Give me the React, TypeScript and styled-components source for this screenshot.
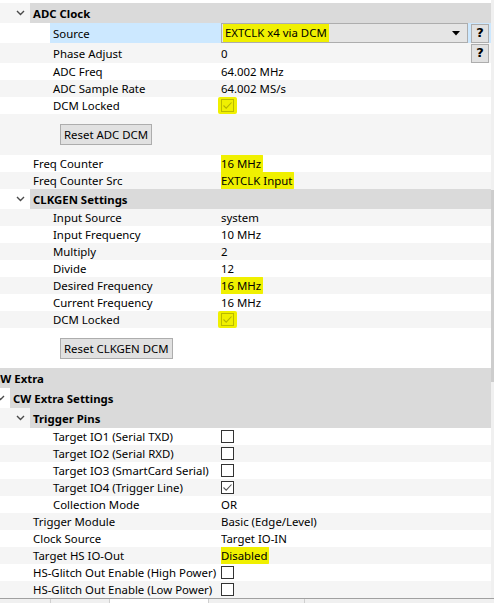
import React from 'react';
import styled, { createGlobalStyle } from 'styled-components';

const Global = createGlobalStyle`
  html, body { margin: 0; padding: 0; background: #fff; overflow: hidden; }
  body { font-family: "Noto Sans", "Segoe UI", sans-serif; font-size: 11.4px; color: #000; }
`;

const SCROLL_X = 30;
const INDENT = 20;
const NAME_W = 250;
const MARK = '#f0f000';

type Value =
  | { kind: 'text'; text: string; mark?: boolean; help?: boolean }
  | { kind: 'check'; checked: boolean; disabled?: boolean; mark?: boolean }
  | { kind: 'combo'; text: string; mark?: boolean; help?: boolean };

type Item =
  | { type: 'group'; level: number; label: string }
  | { type: 'prop'; level: number; label: string; value: Value; tall?: boolean; selected?: boolean }
  | { type: 'action'; level: number; label: string; height: number };

const items: Item[] = [
  { type: 'group', level: 2, label: 'ADC Clock' },
  { type: 'prop', level: 3, label: 'Source', tall: true, selected: true, value: { kind: 'combo', text: 'EXTCLK x4 via DCM', mark: true, help: true } },
  { type: 'prop', level: 3, label: 'Phase Adjust', tall: true, value: { kind: 'text', text: '0', help: true } },
  { type: 'prop', level: 3, label: 'ADC Freq', value: { kind: 'text', text: '64.002 MHz' } },
  { type: 'prop', level: 3, label: 'ADC Sample Rate', value: { kind: 'text', text: '64.002 MS/s' } },
  { type: 'prop', level: 3, label: 'DCM Locked', value: { kind: 'check', checked: true, disabled: true, mark: true } },
  { type: 'action', level: 3, label: 'Reset ADC DCM', height: 41 },
  { type: 'prop', level: 2, label: 'Freq Counter', value: { kind: 'text', text: '16 MHz', mark: true } },
  { type: 'prop', level: 2, label: 'Freq Counter Src', value: { kind: 'text', text: 'EXTCLK Input', mark: true } },
  { type: 'group', level: 2, label: 'CLKGEN Settings' },
  { type: 'prop', level: 3, label: 'Input Source', value: { kind: 'text', text: 'system' } },
  { type: 'prop', level: 3, label: 'Input Frequency', value: { kind: 'text', text: '10 MHz' } },
  { type: 'prop', level: 3, label: 'Multiply', value: { kind: 'text', text: '2' } },
  { type: 'prop', level: 3, label: 'Divide', value: { kind: 'text', text: '12' } },
  { type: 'prop', level: 3, label: 'Desired Frequency', value: { kind: 'text', text: '16 MHz', mark: true } },
  { type: 'prop', level: 3, label: 'Current Frequency', value: { kind: 'text', text: '16 MHz' } },
  { type: 'prop', level: 3, label: 'DCM Locked', value: { kind: 'check', checked: true, disabled: true, mark: true } },
  { type: 'action', level: 3, label: 'Reset CLKGEN DCM', height: 40 },
  { type: 'group', level: 0, label: 'CW Extra' },
  { type: 'group', level: 1, label: 'CW Extra Settings' },
  { type: 'group', level: 2, label: 'Trigger Pins' },
  { type: 'prop', level: 3, label: 'Target IO1 (Serial TXD)', value: { kind: 'check', checked: false } },
  { type: 'prop', level: 3, label: 'Target IO2 (Serial RXD)', value: { kind: 'check', checked: false } },
  { type: 'prop', level: 3, label: 'Target IO3 (SmartCard Serial)', value: { kind: 'check', checked: false } },
  { type: 'prop', level: 3, label: 'Target IO4 (Trigger Line)', value: { kind: 'check', checked: true } },
  { type: 'prop', level: 3, label: 'Collection Mode', value: { kind: 'text', text: 'OR' } },
  { type: 'prop', level: 2, label: 'Trigger Module', value: { kind: 'text', text: 'Basic (Edge/Level)' } },
  { type: 'prop', level: 2, label: 'Clock Source', value: { kind: 'text', text: 'Target IO-IN' } },
  { type: 'prop', level: 2, label: 'Target HS IO-Out', value: { kind: 'text', text: 'Disabled', mark: true } },
  { type: 'prop', level: 2, label: 'HS-Glitch Out Enable (High Power)', value: { kind: 'check', checked: false } },
  { type: 'prop', level: 2, label: 'HS-Glitch Out Enable (Low Power)', value: { kind: 'check', checked: false } },
];

const Page = styled.div`
  width: 494px;
  height: 603px;
  overflow: hidden;
  display: flex;
  flex-direction: column;
`;

const Main = styled.div`
  display: flex;
  height: 598px;
  flex: none;
`;

const Viewport = styled.div`
  width: 491px;
  flex: none;
  overflow: hidden;
  padding-top: 3px;
  box-sizing: border-box;
`;

const TreeBody = styled.div<{ $scroll: number }>`
  width: ${NAME_W + 271}px;
  margin-left: ${(p) => -p.$scroll}px;
  display: flex;
  flex-direction: column;
`;

const Row = styled.div<{ $alt: boolean; $h: number }>`
  display: flex;
  height: ${(p) => p.$h}px;
  line-height: ${(p) => p.$h + 1}px;
  background: ${(p) => (p.$alt ? '#f5f5f5' : '#ffffff')};
  white-space: nowrap;
`;

const Indent = styled.div<{ $w: number }>`
  width: ${(p) => p.$w}px;
  flex: none;
  display: flex;
  align-items: center;
  justify-content: flex-end;
`;

const ChevronBox = styled.div`
  width: 20px;
  height: 100%;
  display: flex;
  align-items: center;
  justify-content: center;
`;

const GroupBar = styled.div`
  flex: 1;
  background: #dadada;
  font-weight: 700;
  padding-left: 3px;
  overflow: hidden;
`;

const NameCell = styled.div`
  width: ${NAME_W}px;
  flex: none;
  display: flex;
`;

const Label = styled.div<{ $sel?: boolean }>`
  flex: 1;
  padding-left: 3px;
  overflow: hidden;
  background: ${(p) => (p.$sel ? '#cce8ff' : 'transparent')};
`;

const ValueCell = styled.div<{ $sel?: boolean }>`
  flex: 1;
  display: flex;
  align-items: center;
  gap: 3px;
  padding: 0 2px 0 1px;
  min-width: 0;
  background: ${(p) => (p.$sel ? '#cce8ff' : 'transparent')};
`;

const ValueText = styled.span`
  flex: 1;
  overflow: hidden;
`;

const Mark = styled.span`
  background: ${MARK};
  padding: 2px 2px;
  margin-left: -2px;
  border-radius: 2px;
  line-height: 15px;
`;

const BoxMark = styled.span<{ $on: boolean }>`
  display: inline-flex;
  align-items: center;
  padding: 2px 3px;
  margin-left: -3px;
  background: ${(p) => (p.$on ? MARK : 'transparent')};
  border-radius: 2px;
`;

const Box = styled.span<{ $disabled?: boolean }>`
  width: 13px;
  height: 13px;
  box-sizing: border-box;
  border: 1px solid ${(p) => (p.$disabled ? 'rgba(0,0,0,0.22)' : '#333')};
  background: ${(p) => (p.$disabled ? 'transparent' : '#fff')};
  display: flex;
  align-items: center;
  justify-content: center;
`;

const Combo = styled.div`
  flex: 1;
  height: 20px;
  box-sizing: border-box;
  border: 1px solid #adadad;
  background: #e5e5e5;
  display: flex;
  align-items: center;
  padding: 0 7px 0 1px;
  line-height: 18px;
`;

const ComboText = styled.span<{ $mark?: boolean }>`
  flex: 1;
  display: flex;
  & > span {
    background: ${(p) => (p.$mark ? MARK : 'transparent')};
    padding: 0 2px 0 2px;
    line-height: 18px;
  }
`;

const HelpButton = styled.button`
  width: 18px;
  height: 19px;
  flex: none;
  margin: 0;
  padding: 0;
  box-sizing: border-box;
  border: 1px solid #adadad;
  background: #e1e1e1;
  font-family: "DejaVu Sans", sans-serif;
  font-weight: 700;
  font-size: 13px;
  line-height: 16px;
  color: #000;
`;

const ActionRow = styled.div<{ $alt: boolean; $h: number }>`
  display: flex;
  height: ${(p) => p.$h}px;
  background: ${(p) => (p.$alt ? '#f5f5f5' : '#ffffff')};
  padding-top: 10px;
  box-sizing: border-box;
`;

const ActionButton = styled.button<{ $left: number }>`
  margin-left: ${(p) => p.$left}px;
  height: 21px;
  padding: 0 3px;
  box-sizing: border-box;
  border: 1px solid #adadad;
  background: #e1e1e1;
  font-family: "Noto Sans", "Segoe UI", sans-serif;
  font-size: 11.4px;
  color: #000;
  line-height: 19px;
`;

const ScrollTrack = styled.div`
  width: 3px;
  flex: none;
  background: #f0f0f0;
  display: flex;
  flex-direction: column;
`;

const ScrollThumb = styled.div`
  background: #cdcdcd;
  width: 100%;
`;

const TabBar = styled.div`
  flex: none;
  height: 24px;
  border-top: 1px solid #a0a0a0;
  background: #f0f0f0;
  display: flex;
`;

const Tab = styled.div<{ $w: number; $active?: boolean }>`
  width: ${(p) => p.$w}px;
  flex: none;
  background: ${(p) => (p.$active ? '#ffffff' : '#f0f0f0')};
  border-right: 1px solid #cfcfcf;
`;

const Chevron = () => (
  <svg width="9" height="6" viewBox="0 0 9 6">
    <path d="M1 1 L4.5 4.5 L8 1" fill="none" stroke="#4a4a4a" strokeWidth="1.4" />
  </svg>
);

const CheckMark = ({ color }: { color: string }) => (
  <svg width="11" height="11" viewBox="0 0 11 11">
    <path d="M1.5 5.5 L4.2 8.2 L9.5 2.5" fill="none" stroke={color} strokeWidth="1.1" />
  </svg>
);

const DropArrow = () => (
  <svg width="8" height="5" viewBox="0 0 8 5">
    <path d="M0 0 H8 L4 4.5 Z" fill="#000" />
  </svg>
);

const renderValue = (v: Value) => {
  switch (v.kind) {
    case 'text':
      return (
        <>
          <ValueText>{v.mark ? <Mark>{v.text}</Mark> : v.text}</ValueText>
          {v.help && <HelpButton>?</HelpButton>}
        </>
      );
    case 'combo':
      return (
        <>
          <Combo>
            <ComboText $mark={v.mark}>
              <span>{v.text}</span>
            </ComboText>
            <DropArrow />
          </Combo>
          {v.help && <HelpButton>?</HelpButton>}
        </>
      );
    case 'check':
      return (
        <BoxMark $on={!!v.mark}>
          <Box $disabled={v.disabled}>
            {v.checked && <CheckMark color={v.disabled ? 'rgba(0,0,0,0.25)' : '#555'} />}
          </Box>
        </BoxMark>
      );
  }
};

const indentOf = (level: number) => INDENT * level + 20;

export default function App() {
  return (
    <>
      <Global />
      <Page>
        <Main>
          <Viewport>
            <TreeBody $scroll={SCROLL_X}>
              {items.map((it, i) => {
                const alt = i % 2 === 0;
                const ind = indentOf(it.level);
                if (it.type === 'group') {
                  return (
                    <Row key={i} $alt={alt} $h={20}>
                      <Indent $w={ind}>
                        <ChevronBox>
                          <Chevron />
                        </ChevronBox>
                      </Indent>
                      <GroupBar>{it.label}</GroupBar>
                    </Row>
                  );
                }
                if (it.type === 'action') {
                  return (
                    <ActionRow key={i} $alt={alt} $h={it.height}>
                      <ActionButton $left={ind + 10}>{it.label}</ActionButton>
                    </ActionRow>
                  );
                }
                return (
                  <Row key={i} $alt={alt} $h={it.tall ? 20 : 17}>
                    <NameCell>
                      <Indent $w={ind} />
                      <Label $sel={it.selected}>{it.label}</Label>
                    </NameCell>
                    <ValueCell $sel={it.selected}>{renderValue(it.value)}</ValueCell>
                  </Row>
                );
              })}
            </TreeBody>
          </Viewport>
          <ScrollTrack>
            <div style={{ height: 190 }} />
            <ScrollThumb style={{ height: 192 }} />
          </ScrollTrack>
        </Main>
        <TabBar>
          <Tab $w={50} />
          <Tab $w={58} />
          <Tab $w={98} $active />
          <Tab $w={95} />
        </TabBar>
      </Page>
    </>
  );
}
